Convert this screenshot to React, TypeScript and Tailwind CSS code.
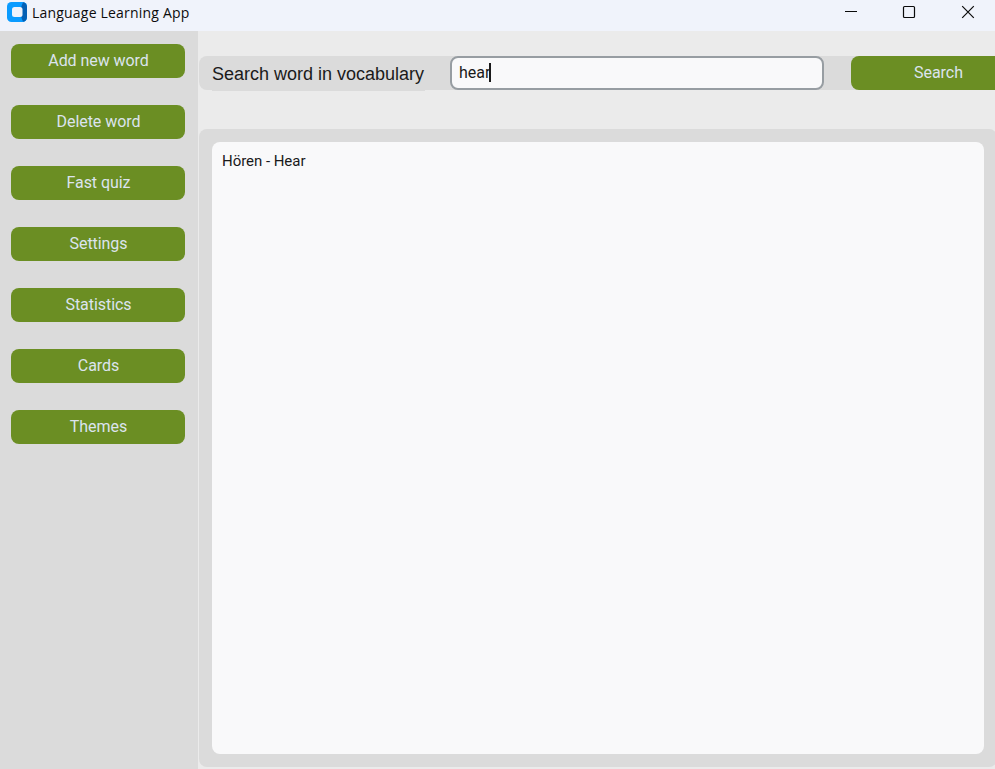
const actions = [
  'Add new word',
  'Delete word',
  'Fast quiz',
  'Settings',
  'Statistics',
  'Cards',
  'Themes',
];

function AppIcon() {
  return (
    <svg width="20" height="20" viewBox="0 0 20 20">
      <rect width="20" height="20" rx="4.5" fill="#0a9bff" />
      <path d="M16 0.2 Q20 0.8 20 5 V15 Q20 19.2 16 19.8 L14 14.5 L15 13 V7 L14 5.5 Z" fill="#0560b4" />
      <rect x="5" y="5" width="10.5" height="10" rx="2.5" fill="#f0f3fb" />
    </svg>
  );
}

function TitleBar() {
  return (
    <header className="flex h-[31px] shrink-0 items-start bg-[#f0f3fb] pl-[7px]">
      <div className="mt-[2px]">
        <AppIcon />
      </div>
      <h1 className="ml-[5px] mt-[3px] flex-1 whitespace-nowrap font-['Open_Sans',sans-serif] text-[14px] leading-5 tracking-[0.2px] text-[#0c0c0c]">
        Language Learning App
      </h1>
      <svg className="shrink-0" width="155" height="30" viewBox="840 0 155 30" fill="none" stroke="#0a0a0a">
        <path d="M845 11.5H857" />
        <rect x="903.5" y="6.5" width="11" height="11" rx="1" strokeWidth="1.2" />
        <path d="M962.2 6.2L973.8 17.8M973.8 6.2L962.2 17.8" strokeWidth="1.2" />
      </svg>
    </header>
  );
}

export default function App() {
  return (
    <div className="flex h-[769px] w-[995px] flex-col overflow-hidden bg-[#ebebeb] font-[Roboto,sans-serif]">
      <TitleBar />
      <div className="flex min-h-0 flex-1">
        <nav className="flex w-[198px] shrink-0 flex-col gap-[27px] bg-[#dbdbdb] pl-[11px] pt-[13px]">
          {actions.map((label) => (
            <button
              key={label}
              className="h-[34px] w-[174px] shrink-0 rounded-lg bg-[#6b8e23] pl-px text-[16px] leading-[34px] tracking-[-0.06px] text-[#dce4ee]"
            >
              {label}
            </button>
          ))}
        </nav>
        <main className="ml-px flex min-w-0 flex-1 flex-col">
          <div className="mt-[25px] flex h-[34px] shrink-0 rounded-l-lg bg-[#dbdbdb]">
            <label className="ml-[13px] h-[35px] w-[213px] shrink-0 whitespace-nowrap bg-[#dbdbdb] font-['Liberation_Sans',sans-serif] text-[18px] leading-[37px] text-[#1a1a1a]">
              Search word in vocabulary
            </label>
            <div className="ml-[25px] flex w-[374px] shrink-0 items-center rounded-lg border-2 border-[#979da2] bg-[#f9f9fa] pl-[7px] text-[16px] text-[#1a1a1a]">
              <span>hear</span>
              <span className="-ml-px -mt-px h-[19px] w-[2px] bg-[#1a1a1a]" />
            </div>
            <button className="ml-[27px] h-[34px] w-[174px] shrink-0 rounded-lg bg-[#6b8e23] pl-px text-[16px] leading-[34px] tracking-[-0.06px] text-[#dce4ee]">
              Search
            </button>
          </div>
          <section className="mt-[39px] h-[638px] w-[798px] shrink-0 rounded-lg bg-[#dbdbdb] pl-[13px] pt-[13px]">
            <div className="h-[612px] w-[772px] rounded-lg bg-[#f9f9fa] pl-[10px] pt-[9px] text-[15px] leading-5 tracking-[-0.04px] text-[#1a1a1a]">
              Hören - Hear
            </div>
          </section>
        </main>
      </div>
    </div>
  );
}
